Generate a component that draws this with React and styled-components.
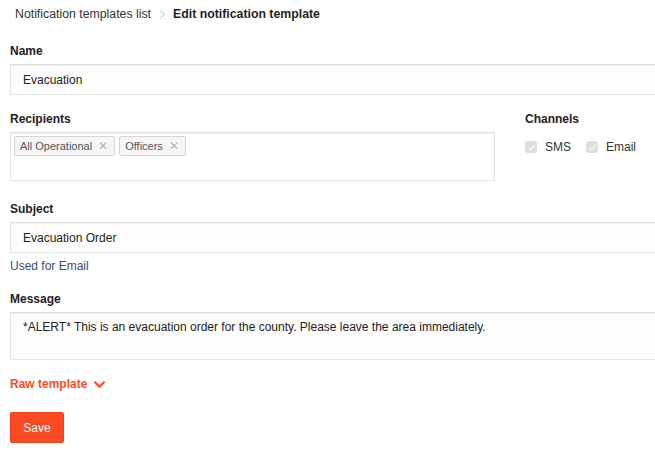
import React from "react"
import styled, { createGlobalStyle } from "styled-components"

const GlobalStyle = createGlobalStyle`
  html, body {
    margin: 0;
    padding: 0;
    background: #fff;
    overflow: hidden;
  }
  body {
    font-family: "Liberation Sans", Arial, Helvetica, sans-serif;
    font-size: 12px;
    color: #222;
  }
`

const Page = styled.div`
  width: 720px;
  padding: 0 10px;
  box-sizing: border-box;
`

const Breadcrumb = styled.nav`
  display: flex;
  align-items: center;
  height: 28px;
  padding-left: 5px;
  font-size: 12.3px;
  color: #333;
`

const Crumb = styled.span`
  font-weight: ${(p) => (p.$current ? 700 : 400)};
  color: ${(p) => (p.$current ? "#1f1f1f" : "#333")};
`

const Separator = styled.span`
  display: inline-flex;
  margin: 0 6px 0 7px;
  color: #cfcfcf;
`

const Field = styled.div`
  margin-top: ${(p) => p.$top || 0}px;
`

const Label = styled.div`
  font-weight: 700;
  font-size: 12px;
  line-height: 16px;
  color: #222;
  padding-top: 1px;
  margin-bottom: 5px;
`

const Input = styled.div`
  box-sizing: border-box;
  height: 31px;
  border: 1px solid #e4e4e4;
  border-top-color: #dcdcdc;
  box-shadow: inset 0 1px 2px rgba(0, 0, 0, 0.06);
  background: #fdfdfd;
  padding: 0 12px;
  display: flex;
  align-items: center;
  font-size: 12px;
  color: #222;
`

const TextArea = styled(Input)`
  height: 48px;
  align-items: flex-start;
  padding-top: 7px;
`

const Row = styled.div`
  display: flex;
  gap: 30px;
`

const RecipientsCol = styled.div`
  width: 485px;
`

const TagBox = styled.div`
  box-sizing: border-box;
  height: 49px;
  border: 1px solid #e4e4e4;
  border-top-color: #dcdcdc;
  box-shadow: inset 0 1px 2px rgba(0, 0, 0, 0.06);
  background: #fff;
  padding: 3px;
  display: flex;
  align-items: flex-start;
  gap: 4px;
`

const Tag = styled.span`
  box-sizing: border-box;
  display: inline-flex;
  align-items: center;
  height: 20px;
  padding: 0 6px 0 5px;
  border: 1px solid #d6d6d6;
  border-radius: 2px;
  background: #f6f6f6;
  color: #555;
  font-size: 11px;
`

const TagClose = styled.span`
  margin-left: 6px;
  color: #b4b4b4;
  font-size: 12px;
  line-height: 1;
`

const ChannelsCol = styled.div`
  flex: 1;
`

const Checks = styled.div`
  display: flex;
  align-items: center;
  gap: 15px;
  padding-top: 8px;
`

const CheckItem = styled.label`
  display: inline-flex;
  align-items: center;
  gap: 8px;
  font-size: 12px;
  color: #333;
`

const Box = styled.span`
  width: 12px;
  height: 12px;
  border-radius: 3px;
  background: #dedede;
  display: inline-flex;
  align-items: center;
  justify-content: center;
`

const Hint = styled.div`
  margin-top: 5px;
  font-size: 12px;
  line-height: 16px;
  color: #3c4d78;
`

const Toggle = styled.div`
  margin-top: 16px;
  display: flex;
  align-items: center;
  gap: 7px;
  height: 16px;
  font-weight: 700;
  font-size: 12px;
  color: #f94b25;
`

const SaveButton = styled.button`
  margin-top: 20px;
  width: 54px;
  height: 31px;
  border: 1px solid #ee4420;
  border-radius: 2px;
  background: #fc4a22;
  color: #fff;
  font-family: inherit;
  font-size: 12px;
  padding: 0;
`

const Check = () => (
  <svg width="9" height="9" viewBox="0 0 10 10">
    <path d="M1.5 5.2 L4 7.6 L8.6 2.4" fill="none" stroke="#f4f4f4" strokeWidth="1.6" strokeLinecap="round" strokeLinejoin="round" />
  </svg>
)

const Chevron = ({ size = 8, color = "currentColor", width = 1.4, rotate = 0 }) => (
  <svg width={size} height={size} viewBox="0 0 10 10" style={{ transform: `rotate(${rotate}deg)` }}>
    <path d="M3 1 L7 5 L3 9" fill="none" stroke={color} strokeWidth={width} strokeLinecap="round" strokeLinejoin="round" />
  </svg>
)

export default function App() {
  return (
    <Page>
      <GlobalStyle />
      <Breadcrumb>
        <Crumb>Notification templates list</Crumb>
        <Separator>
          <Chevron size={9} />
        </Separator>
        <Crumb $current>Edit notification template</Crumb>
      </Breadcrumb>

      <Field $top={14}>
        <Label>Name</Label>
        <Input>Evacuation</Input>
      </Field>

      <Field $top={15}>
        <Row>
          <RecipientsCol>
            <Label>Recipients</Label>
            <TagBox>
              <Tag>
                All Operational<TagClose>✕</TagClose>
              </Tag>
              <Tag>
                Officers<TagClose>✕</TagClose>
              </Tag>
            </TagBox>
          </RecipientsCol>
          <ChannelsCol>
            <Label>Channels</Label>
            <Checks>
              <CheckItem>
                <Box>
                  <Check />
                </Box>
                SMS
              </CheckItem>
              <CheckItem>
                <Box>
                  <Check />
                </Box>
                Email
              </CheckItem>
            </Checks>
          </ChannelsCol>
        </Row>
      </Field>

      <Field $top={19}>
        <Label>Subject</Label>
        <Input>Evacuation Order</Input>
        <Hint>Used for Email</Hint>
      </Field>

      <Field $top={16}>
        <Label>Message</Label>
        <TextArea>*ALERT* This is an evacuation order for the county. Please leave the area immediately.</TextArea>
      </Field>

      <Toggle>
        Raw template
        <Chevron size={11} width={2} rotate={90} />
      </Toggle>

      <SaveButton>Save</SaveButton>
    </Page>
  )
}
